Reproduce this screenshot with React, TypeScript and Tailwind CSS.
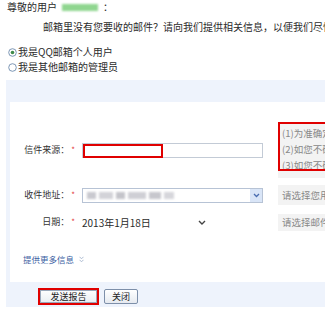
import React from "react";

function Radio({ checked }: { checked?: boolean }) {
  return (
    <svg width="9" height="9" viewBox="0 0 9 9" className="shrink-0">
      <circle cx="4.5" cy="4.5" r="3.8" fill="#fff" stroke="#6f8cae" strokeWidth="0.9" />
      {checked && <circle cx="4.5" cy="4.5" r="1.8" fill="#3f8a4a" />}
    </svg>
  );
}

function Label({ text }: { text: string }) {
  return (
    <div className="w-[72px] shrink-0 flex justify-end items-center pr-[7px] text-[9px] leading-[14px] text-[#333] whitespace-nowrap">
      <span>{text}</span>
      <span className="ml-[2px] text-[#e23a3a] text-[8px]">*</span>
    </div>
  );
}

export default function App() {
  return (
    <div className="w-[325px] h-[309px] overflow-hidden bg-white text-[#2b2b2b] font-['Noto_Sans_CJK_SC','Noto_Sans',sans-serif]">
      <div className="h-[14px] pl-[7px] flex items-center text-[10px] leading-[14px] whitespace-nowrap">
        <span>尊敬的用户</span>
        <span className="ml-[5px] inline-block w-[36px] h-[7px] bg-[#8fd68f] blur-[1px]" />
        <span className="ml-[5px]">：</span>
      </div>
      <div className="mt-[6px] h-[14px] pl-[43px] text-[10px] leading-[14px] whitespace-nowrap overflow-hidden">
        邮箱里没有您要收的邮件？请向我们提供相关信息，以便我们尽快处理。
      </div>
      <div className="mt-[11px] h-[14px] pl-[8px] flex items-center gap-[1px] text-[10px] leading-[14px] whitespace-nowrap">
        <Radio checked />
        <span>我是QQ邮箱个人用户</span>
      </div>
      <div className="mt-[1px] h-[14px] pl-[8px] flex items-center gap-[1px] text-[10px] leading-[14px] whitespace-nowrap">
        <Radio />
        <span>我是其他邮箱的管理员</span>
      </div>

      <div className="mt-[6px] ml-[6px] h-[227px] bg-[#eef3fc] flex flex-col">
        <div className="h-[22px] shrink-0" />
        <div className="ml-[4px] h-[180px] shrink-0 bg-white flex flex-col">
          {/* Row 1 */}
          <div className="mt-[20px] h-[56px] flex items-center">
            <Label text="信件来源：" />
            <div className="relative w-[181px] h-[15px] shrink-0 border border-[#c3cbd6] bg-white">
              <div className="absolute left-0 top-0 w-[80px] h-[14px] border-2 border-[#e00000]" />
            </div>
            <div className="ml-[15px] flex-1 self-stretch bg-[#f3f3f3] overflow-hidden">
              <div className="h-[49px] border-2 border-r-0 border-[#e00000] pl-[2px] pt-[1px] text-[9.5px] leading-[16px] text-[#888] whitespace-nowrap overflow-hidden">
                <div>(1)为准确定位问题，请填写</div>
                <div>(2)如您不确定发件地址</div>
                <div>(3)如您不确定收件时间</div>
              </div>
            </div>
          </div>

          {/* Row 2 */}
          <div className="mt-[7px] h-[20px] flex items-center">
            <Label text="收件地址：" />
            <div className="w-[181px] h-[15px] shrink-0 border border-[#b7c3d5] bg-white flex items-center">
              <div className="flex-1 flex items-center gap-[3px] pl-[4px] blur-[1px]">
                <span className="w-[9px] h-[7px] bg-[#c9c9cf]" />
                <span className="w-[14px] h-[7px] bg-[#d3d3d8]" />
                <span className="w-[9px] h-[7px] bg-[#c4c4ca]" />
                <span className="w-[18px] h-[7px] bg-[#cfcfd5]" />
                <span className="w-[12px] h-[7px] bg-[#c7c7cd]" />
                <span className="w-[10px] h-[7px] bg-[#d6d6db]" />
              </div>
              <div className="w-[12px] h-full bg-[#d9e5f7] flex items-center justify-center">
                <svg width="7" height="5" viewBox="0 0 7 5">
                  <polyline points="1,1 3.5,3.5 6,1" fill="none" stroke="#4a6db0" strokeWidth="1.3" />
                </svg>
              </div>
            </div>
            <div className="ml-[15px] flex-1 h-[20px] bg-[#f3f3f3] pl-[4px] flex items-center text-[9.5px] leading-[14px] text-[#888] whitespace-nowrap overflow-hidden">
              请选择您用于收信的地址
            </div>
          </div>

          {/* Row 3 */}
          <div className="mt-[7px] h-[20px] flex items-center">
            <Label text="日期：" />
            <div className="w-[181px] shrink-0 flex items-center text-[10px] leading-[15px] whitespace-nowrap">
              <span className="w-[116px]">2013年1月18日</span>
              <svg width="8" height="5" viewBox="0 0 8 5">
                <polyline points="1,1 4,4 7,1" fill="none" stroke="#444" strokeWidth="1.4" />
              </svg>
            </div>
            <div className="ml-[15px] flex-1 h-[17px] bg-[#f3f3f3] pl-[4px] flex items-center text-[9.5px] leading-[14px] text-[#888] whitespace-nowrap overflow-hidden">
              请选择邮件的接收日期
            </div>
          </div>

          {/* More info link */}
          <div className="mt-[20px] h-[14px] pl-[13px] flex items-center gap-[5px] text-[8.5px] leading-[14px] text-[#3d5fa3] whitespace-nowrap">
            <span>提供更多信息</span>
            <svg width="5" height="7" viewBox="0 0 5 7">
              <polyline points="0.5,0.8 2.5,2.8 4.5,0.8" fill="none" stroke="#a3b3cc" strokeWidth="0.9" />
              <polyline points="0.5,3.8 2.5,5.8 4.5,3.8" fill="none" stroke="#a3b3cc" strokeWidth="0.9" />
            </svg>
          </div>
        </div>

        {/* Buttons */}
        <div className="flex-1 flex items-start pt-[6px] pl-[32px]">
          <div className="w-[61px] h-[17px] border-2 border-[#e00000] bg-white flex">
            <div className="flex-1 flex items-center justify-center shadow-[inset_0_0_0_1px_#9aa7ba] bg-gradient-to-b from-white to-[#e9edf2] text-[9px] leading-[13px] text-[#222] whitespace-nowrap">
              发送报告
            </div>
          </div>
          <div className="ml-[5px] mt-[1px] w-[34px] h-[15px] flex items-center justify-center border border-[#7d8fa9] rounded-[2px] bg-gradient-to-b from-white to-[#e6eaf0] text-[9px] leading-[13px] text-[#222] whitespace-nowrap">
            关闭
          </div>
        </div>
      </div>
    </div>
  );
}
